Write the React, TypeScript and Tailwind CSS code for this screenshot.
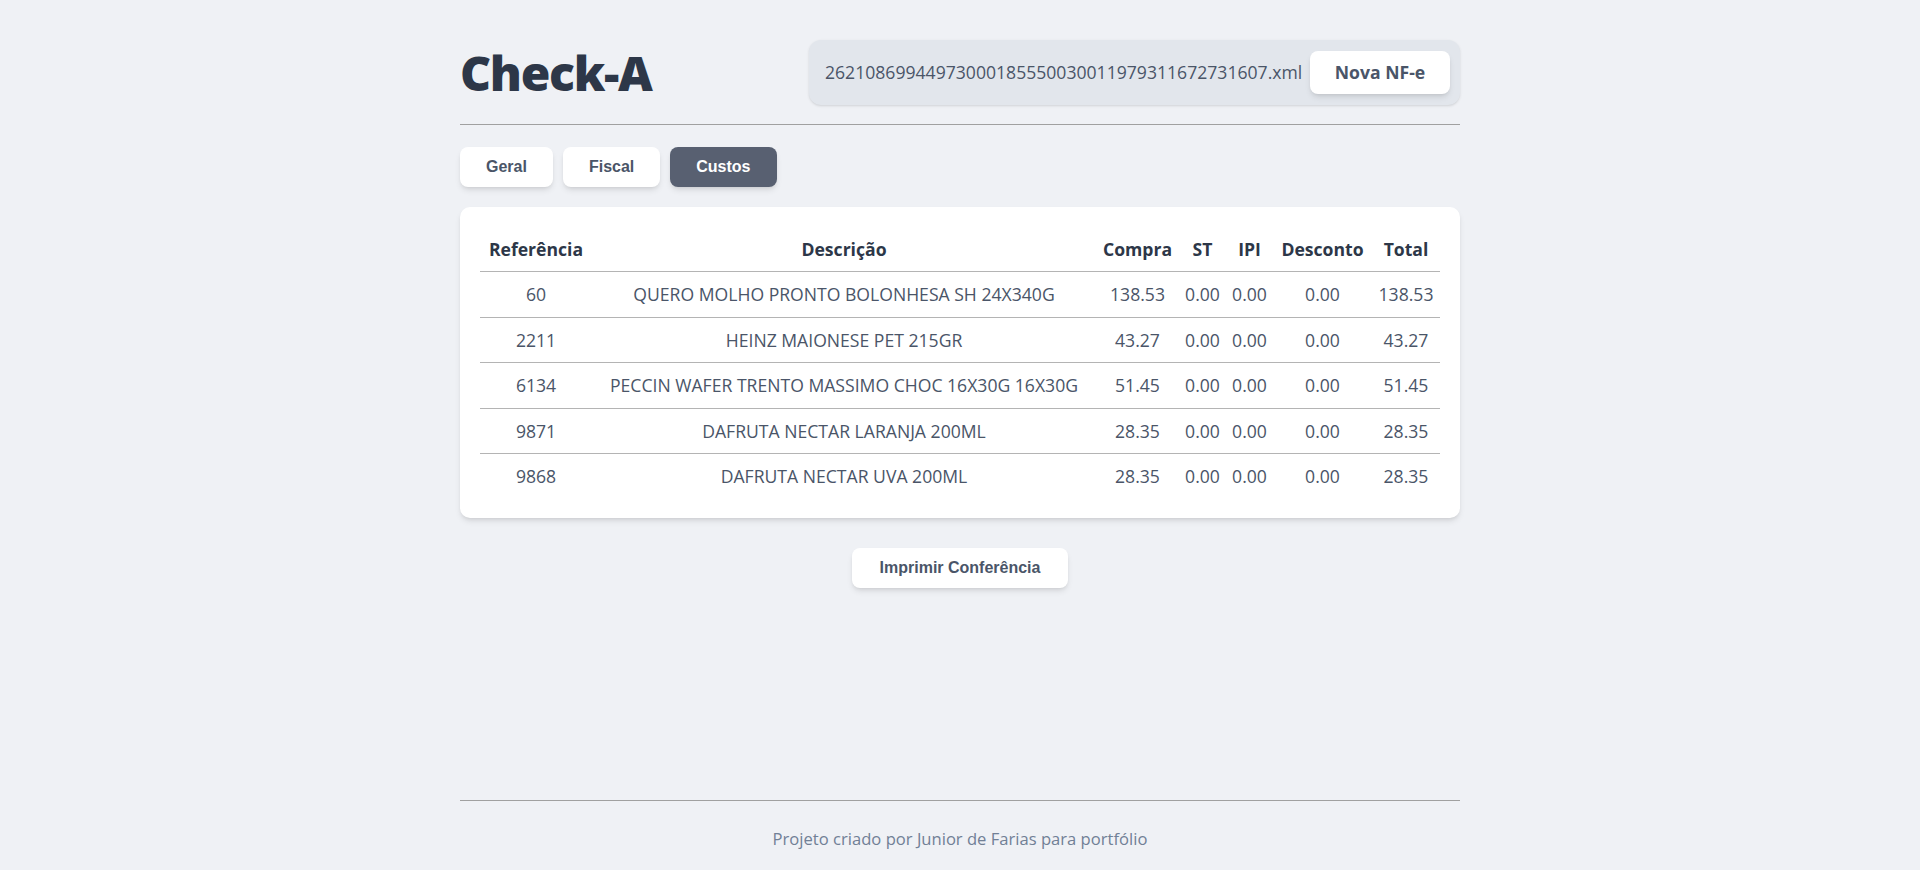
import { useState } from "react";

const items = [
  { ref: "60", desc: "QUERO MOLHO PRONTO BOLONHESA SH 24X340G", compra: "138.53", st: "0.00", ipi: "0.00", desconto: "0.00", total: "138.53" },
  { ref: "2211", desc: "HEINZ MAIONESE PET 215GR", compra: "43.27", st: "0.00", ipi: "0.00", desconto: "0.00", total: "43.27" },
  { ref: "6134", desc: "PECCIN WAFER TRENTO MASSIMO CHOC 16X30G 16X30G", compra: "51.45", st: "0.00", ipi: "0.00", desconto: "0.00", total: "51.45" },
  { ref: "9871", desc: "DAFRUTA NECTAR LARANJA 200ML", compra: "28.35", st: "0.00", ipi: "0.00", desconto: "0.00", total: "28.35" },
  { ref: "9868", desc: "DAFRUTA NECTAR UVA 200ML", compra: "28.35", st: "0.00", ipi: "0.00", desconto: "0.00", total: "28.35" },
];

const tabs = ["Geral", "Fiscal", "Custos"];

export default function App() {
  const [tab, setTab] = useState("Custos");

  return (
    <div className="min-h-screen flex flex-col bg-[#eff1f5] font-['Open_Sans',sans-serif]">
      <div className="w-[1000px] mx-auto flex-1">
        <header className="pt-[40px] flex items-center justify-between">
          <h1 className="text-[48px] leading-none font-extrabold text-[#2d3748] tracking-[-1.3px]">Check-A</h1>
          <div className="h-[65px] w-[651px] pl-4 pr-[10px] rounded-xl bg-[#e2e6ec] shadow-sm flex items-center justify-between">
            <span className="text-[17.6px] text-[#4a5568]">26210869944973000185550030011979311672731607.xml</span>
            <button className="h-[43px] w-[140px] rounded-lg bg-white shadow-md text-[17.6px] font-bold text-[#4a5568]">Nova NF-e</button>
          </div>
        </header>

        <hr className="mt-[19px] border-0 border-t border-[#a0a0a0]" />

        <nav className="mt-[22px] flex gap-[10px]">
          {tabs.map((t) => (
            <button
              key={t}
              onClick={() => setTab(t)}
              className={
                t === tab
                  ? "h-[40px] px-[26px] rounded-lg bg-[#586071] text-white shadow-md text-[16px] font-bold font-['Liberation_Sans',sans-serif]"
                  : "h-[40px] px-[26px] rounded-lg bg-white text-[#4a5568] shadow-md text-[16px] font-bold font-['Liberation_Sans',sans-serif]"
              }
            >
              {t}
            </button>
          ))}
        </nav>

        <div className="mt-5 bg-white rounded-[10px] shadow-md p-5">
          <table className="w-full table-fixed border-collapse text-[17.6px]">
            <colgroup>
              <col className="w-[112px]" />
              <col className="w-[504px]" />
              <col className="w-[83px]" />
              <col className="w-[47px]" />
              <col className="w-[47px]" />
              <col className="w-[99px]" />
              <col className="w-[68px]" />
            </colgroup>
            <thead>
              <tr className="border-b border-[#b4b4b4]">
                {["Referência", "Descrição", "Compra", "ST", "IPI", "Desconto", "Total"].map((h) => (
                  <th key={h} className="py-[9px] px-1 leading-[26.4px] font-bold text-[#2d3748] text-center whitespace-nowrap">{h}</th>
                ))}
              </tr>
            </thead>
            <tbody>
              {items.map((it, i) => (
                <tr key={it.ref} className={i > 0 ? "border-t border-[#b4b4b4]" : ""}>
                  <td className="py-[9px] px-1 leading-[26.4px] text-center text-[#4a5568]">{it.ref}</td>
                  <td className="py-[9px] px-1 leading-[26.4px] text-center text-[#4a5568] whitespace-nowrap">{it.desc}</td>
                  <td className="py-[9px] px-1 leading-[26.4px] text-center text-[#4a5568]">{it.compra}</td>
                  <td className="py-[9px] px-1 leading-[26.4px] text-center text-[#4a5568]">{it.st}</td>
                  <td className="py-[9px] px-1 leading-[26.4px] text-center text-[#4a5568]">{it.ipi}</td>
                  <td className="py-[9px] px-1 leading-[26.4px] text-center text-[#4a5568]">{it.desconto}</td>
                  <td className="py-[9px] px-1 leading-[26.4px] text-center text-[#4a5568]">{it.total}</td>
                </tr>
              ))}
            </tbody>
          </table>
        </div>

        <div className="mt-[30px] flex justify-center">
          <button className="h-[40px] px-[28px] rounded-lg bg-white shadow-md text-[16px] font-bold text-[#4a5568] font-['Liberation_Sans',sans-serif]">
            Imprimir Conferência
          </button>
        </div>
      </div>

      <footer className="w-[1000px] mx-auto border-t border-[#a0a0a0] pt-[26px] pb-[19px] text-center">
        <p className="text-[16.6px] leading-[24px] text-[#718096]">Projeto criado por Junior de Farias para portfólio</p>
      </footer>
    </div>
  );
}
